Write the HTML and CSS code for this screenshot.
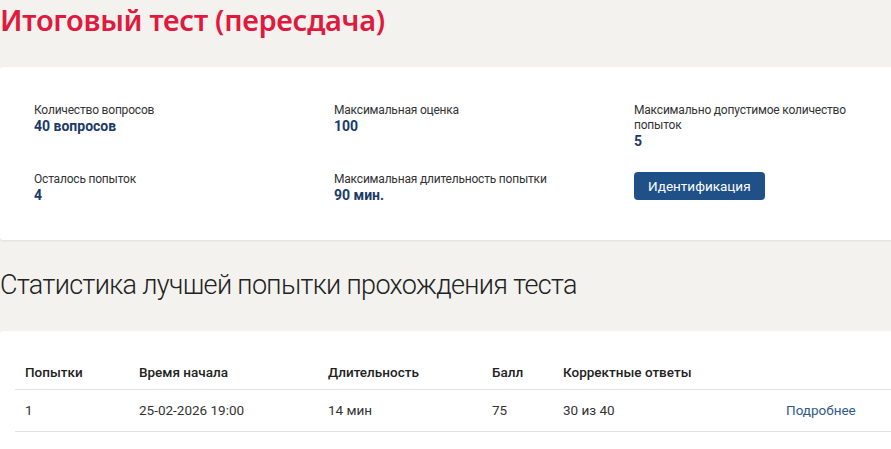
FILE: index.html
```html
<!DOCTYPE html>
<html lang="ru">
<head>
  <meta charset="UTF-8" />
  <meta name="viewport" content="width=device-width, initial-scale=1.0" />
  <title>Итоговый тест (пересдача)</title>
  <link rel="stylesheet" href="styles.css">
</head>
<body>
  <div class="page">

    <h1 class="test-title">Итоговый тест (пересдача)</h1>

    <!-- Test info -->
    <section class="card info-card">
      <div class="info-grid">
        <div class="info-item">
          <div class="info-label">Количество вопросов</div>
          <div class="info-value">40 вопросов</div>
        </div>
        <div class="info-item">
          <div class="info-label">Максимальная оценка</div>
          <div class="info-value">100</div>
        </div>
        <div class="info-item">
          <div class="info-label">Максимально допустимое количество попыток</div>
          <div class="info-value">5</div>
        </div>
        <div class="info-item">
          <div class="info-label">Осталось попыток</div>
          <div class="info-value">4</div>
        </div>
        <div class="info-item">
          <div class="info-label">Максимальная длительность попытки</div>
          <div class="info-value">90 мин.</div>
        </div>
        <div class="info-item">
          <button class="btn-primary" type="button">Идентификация</button>
        </div>
      </div>
    </section>

    <h2 class="section-title">Статистика лучшей попытки прохождения теста</h2>

    <!-- Best attempt -->
    <section class="card stats-card">
      <table class="stats-table">
        <colgroup>
          <col class="col-try">
          <col class="col-start">
          <col class="col-duration">
          <col class="col-score">
          <col class="col-correct">
          <col class="col-link">
        </colgroup>
        <thead>
          <tr>
            <th>Попытки</th>
            <th>Время начала</th>
            <th>Длительность</th>
            <th>Балл</th>
            <th>Корректные ответы</th>
            <th></th>
          </tr>
        </thead>
        <tbody>
          <tr>
            <td>1</td>
            <td>25-02-2026 19:00</td>
            <td>14 мин</td>
            <td>75</td>
            <td>30 из 40</td>
            <td><a href="#" class="details-link">Подробнее</a></td>
          </tr>
        </tbody>
      </table>
    </section>

  </div>
</body>
</html>
```

FILE: styles.css
```css
* {
  box-sizing: border-box;
  margin: 0;
  padding: 0;
}

body {
  font-family: Roboto, 'Noto Sans', sans-serif;
  background-color: #f3f2ef;
  color: #333;
  overflow: hidden;
}

.page {
  width: 912px;
}

.test-title {
  font-family: 'Noto Sans', sans-serif;
  font-size: 29px;
  font-weight: 600;
  line-height: 40px;
  color: #e01a3f;
  letter-spacing: -0.3px;
  margin-bottom: 27px;
}

.card {
  background: #fff;
  border-radius: 3px;
  box-shadow: 0 1px 2px rgba(0, 0, 0, 0.08);
}

/* --- Info card --- */
.info-card {
  padding: 36px 0 0 34px;
  height: 173px;
}

.info-grid {
  display: grid;
  grid-template-columns: 300px 300px 225px;
  row-gap: 22px;
}

.info-label {
  font-size: 12px;
  line-height: 15px;
  letter-spacing: -0.2px;
  color: #333;
}

.info-value {
  font-size: 14px;
  font-weight: 700;
  line-height: 17px;
  color: #1b3a68;
}

.btn-primary {
  font-family: inherit;
  font-size: 13.5px;
  color: #fff;
  background: #1f5088;
  border: none;
  border-radius: 4px;
  padding: 0 14px;
  height: 28px;
  cursor: pointer;
}

/* --- Stats --- */
.section-title {
  font-family: Roboto, sans-serif;
  font-size: 27px;
  font-weight: 300;
  line-height: 40px;
  letter-spacing: -0.65px;
  color: #222;
  margin-top: 25px;
  margin-bottom: 26px;
}

.stats-card {
  padding: 25px 0 40px 15px;
}

.stats-table {
  width: 896px;
  border-collapse: collapse;
  table-layout: fixed;
  font-size: 13.5px;
}

.col-try { width: 114px; }
.col-start { width: 189px; }
.col-duration { width: 164px; }
.col-score { width: 71px; }
.col-correct { width: 223px; }

.stats-table th {
  text-align: left;
  font-weight: 500;
  color: #222;
  height: 33px;
  padding: 0 10px;
  border-bottom: 1px solid #e3e3e3;
}

.stats-table td {
  color: #333;
  height: 42px;
  padding: 0 10px;
  border-bottom: 1px solid #e3e3e3;
}

.details-link {
  color: #2e5b8b;
  text-decoration: none;
}
```
